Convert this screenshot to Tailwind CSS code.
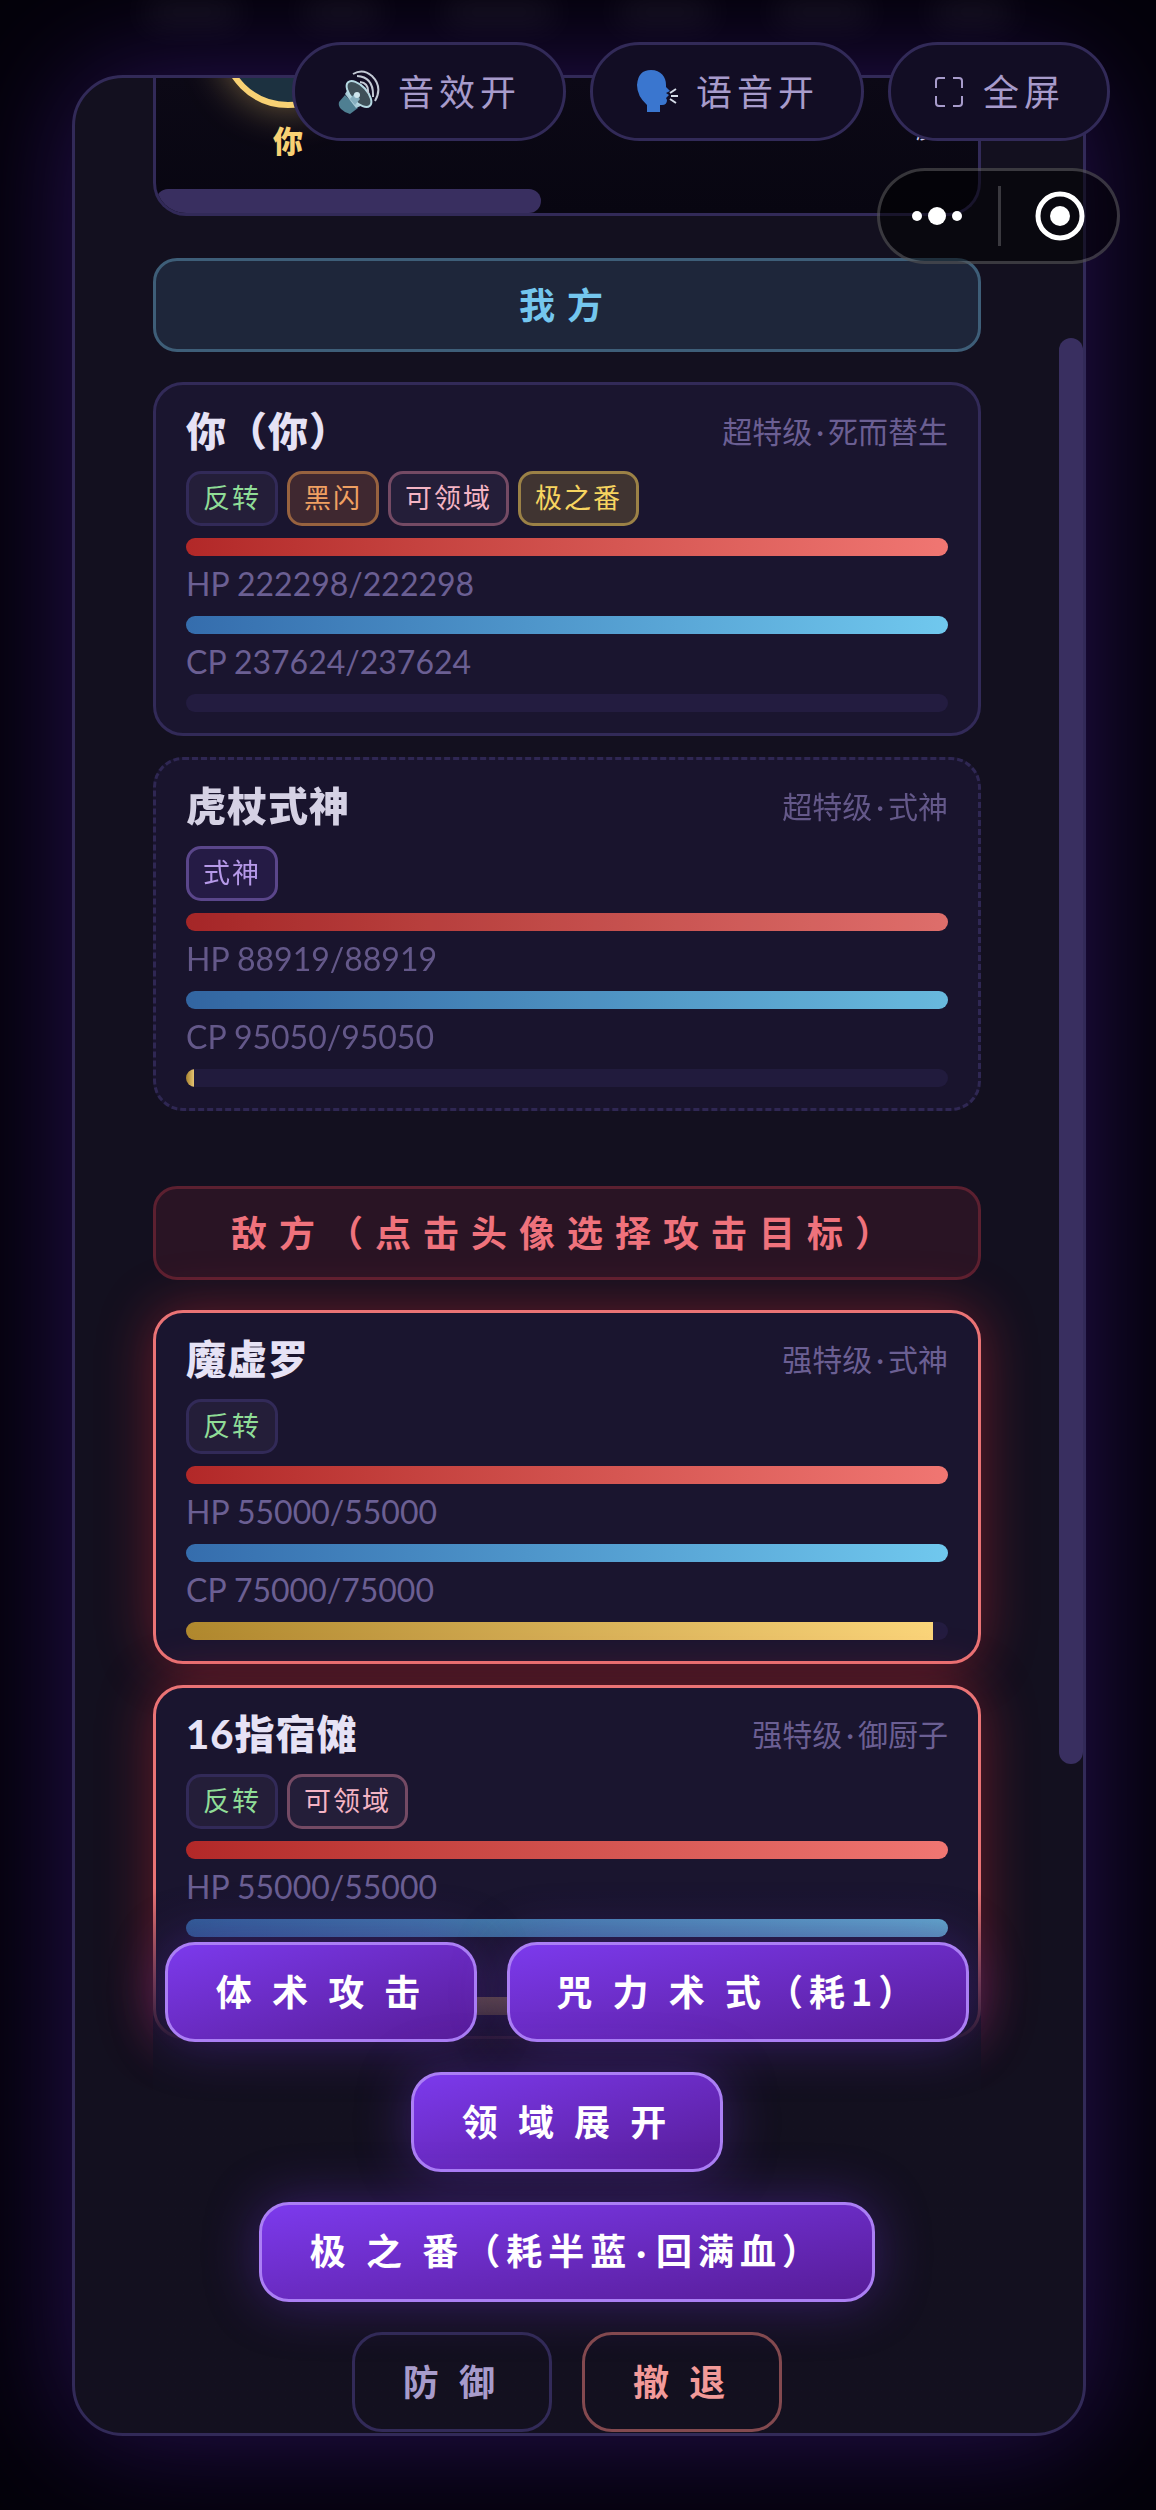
<!DOCTYPE html>
<html lang="zh-CN">
<head>
<meta charset="UTF-8">
<meta name="viewport" content="width=device-width, initial-scale=1.0">
<title>咒术对战</title>
<script src="https://cdn.jsdelivr.net/npm/@tailwindcss/browser@4"></script>
</head>
<body class="relative min-h-screen overflow-x-hidden bg-[#04020a] font-[Lato,'Noto_Sans_CJK_SC',sans-serif] text-[#e6e2f5]">

<!-- top controls -->
<nav class="absolute top-[42px] right-[46px] z-20 flex gap-6 text-[36px] leading-[54px] tracking-[5px] text-[#a79bcb]">
<button class="flex h-[99px] items-center gap-[18px] rounded-full border-3 border-[#322a58] bg-[#120d24] px-[42px]">
<svg class="h-[45px] w-[43px]" viewBox="0 0 43 45" fill="none">
<path d="M2 33 L8 26 L21 39 L13 45 Q8 44 4 40 Q1 37 2 33Z" fill="#4f7f92"/>
<path d="M8 25 L11 20 L26 36 L19 39Z" fill="#a9cbd8"/>
<ellipse cx="22" cy="25" rx="8" ry="16" transform="rotate(-43 22 25)" fill="#3f5059" stroke="#b5d8e2" stroke-width="2"/>
<path d="M13 30 L18 24 L23 30 L18 36Z" fill="#86afbf"/>
<circle cx="20" cy="26" r="3" fill="#cfe6ee"/>
<path d="M23 13 Q32 14 31 24 M20 7 Q37 8 36 28 M16 5 Q26 -1 35 7 Q46 18 38 32" stroke="#c3c9d4" stroke-width="2"/>
</svg>
<span>音效开</span>
</button>
<button class="flex h-[99px] items-center gap-[18px] rounded-full border-3 border-[#322a58] bg-[#120d24] px-[42px]">
<svg class="h-[45px] w-[43px]" viewBox="0 0 43 45" fill="none">
<path d="M16 1 C26 1 31 8 31 16 L31 18 L35 22 L31 24 L34 26 L31 29 L32 31 Q32 36 27 36 L25 36 L25 43 L12 43 L12 36 Q2 27 2 16 Q3 1 16 1Z" fill="#3a76cf"/>
<path d="M35 24 L41 20 M36 27 L43 27 M35 30 L41 34" stroke="#d5dce8" stroke-width="2"/>
</svg>
<span>语音开</span>
</button>
<button class="flex h-[99px] items-center gap-[18px] rounded-full border-3 border-[#322a58] bg-[#120d24] px-[42px]">
<svg class="h-8 w-8" viewBox="0 0 32 32" fill="none" stroke="#a79bcb" stroke-width="2">
<path d="M3 12 V5 Q3 2 6 2 H12 M20 2 H26 Q29 2 29 5 V12 M29 20 V27 Q29 30 26 30 H20 M12 30 H6 Q3 30 3 27 V20"/>
</svg>
<span>全屏</span>
</button>
</nav>

<!-- host app capsule -->
<div class="absolute top-[168px] right-9 z-20 flex h-24 w-[243px] items-center justify-between rounded-full border-3 border-white/20 bg-black/50 pr-8 pl-[30px]">
<button aria-label="更多"><svg class="h-[18px] w-[54px]" viewBox="0 0 54 18" fill="#fff"><circle cx="7" cy="9" r="5"/><circle cx="27" cy="9" r="9"/><circle cx="47" cy="9" r="5"/></svg></button>
<span class="h-[60px] w-[3px] bg-white/20"></span>
<button aria-label="关闭"><svg class="h-[50px] w-[50px]" viewBox="0 0 50 50"><circle cx="25" cy="25" r="22" fill="none" stroke="#fff" stroke-width="5"/><circle cx="25" cy="25" r="10" fill="#fff"/></svg></button>
</div>

<div class="pt-[75px] pr-[70px] pb-[74px] pl-[72px]">
<main class="relative overflow-hidden rounded-[51px] border-3 border-[#322a58] bg-[#13101f] pr-[102px] pb-px pl-[78px] shadow-[0_0_120px_rgba(100,45,215,0.36)]">

<!-- scroll thumb -->
<div class="absolute top-[260px] right-0 h-[1426px] w-6 rounded-full bg-[#392f60]"></div>

<!-- arena -->
<section class="relative h-[138px] overflow-hidden rounded-b-[33px] border-3 border-t-0 border-[#322a58] bg-linear-to-b from-[#0c0916] to-[#080611]">
<div class="absolute -top-[104px] left-[65px] size-[134px] rounded-full border-6 border-[#f7d174] bg-[#1c3140] shadow-[0_0_42px_rgba(247,209,116,0.45)]"></div>
<span class="absolute top-[40px] left-[117px] text-[30px] leading-[44px] font-black text-[#f7d174]">你</span>
<span class="absolute top-[35px] left-[760px] text-[24px] leading-8 whitespace-nowrap text-[#cfc8e6]">魔虚罗</span>
<div class="absolute bottom-0 left-0 h-6 w-[385px] rounded-full bg-[#392f60]"></div>
</section>

<h2 class="mt-[42px] flex h-[94px] items-center justify-center rounded-3xl border-3 border-[#3e5e78] bg-[#1e263a] text-[36px] font-bold tracking-[12px] text-[#74c6ee]">我方</h2>

<article class="mt-[30px] rounded-[30px] border-3 border-[#322a58] bg-[#1a152f] px-[30px] py-[21px]">
<header class="flex items-center justify-between leading-[50px]">
<h3 class="text-[40px] font-black tracking-[1px]">你（你）</h3>
<span class="text-[30px] text-[#6b5f93]">超特级<span class="mx-1">·</span>死而替生</span>
</header>
<div class="mt-[15px] mb-3 flex gap-[9px] text-[27px] leading-[47px] tracking-[2px]">
<span class="rounded-[15px] border-3 border-[#322a58] bg-[#241e39] px-[14px] pb-[2px] text-[#8fdc97]">反转</span>
<span class="rounded-[15px] border-3 border-[#97623f] bg-[#3f2830] px-[14px] pb-[2px] text-[#f0a062]">黑闪</span>
<span class="rounded-[15px] border-3 border-[#744a64] bg-[#241e39] px-[14px] pb-[2px] text-[#f4b4c4]">可领域</span>
<span class="rounded-[15px] border-3 border-[#9b8146] bg-[#403431] px-[14px] pb-[2px] text-[#f7d560]">极之番</span>
</div>
<div class="h-[18px] overflow-hidden rounded-full bg-[#231c40]"><div class="h-full bg-linear-to-r from-[#b22828] to-[#f07672]" style="width:100%"></div></div>
<p class="h-[60px] text-[32px] leading-[56px] text-[#6b5f93]">HP 222298/222298</p>
<div class="h-[18px] overflow-hidden rounded-full bg-[#231c40]"><div class="h-full bg-linear-to-r from-[#356dad] to-[#70c8ee]" style="width:100%"></div></div>
<p class="h-[60px] text-[32px] leading-[56px] text-[#6b5f93]">CP 237624/237624</p>
<div class="h-[18px] overflow-hidden rounded-full bg-[#231c40]"></div>
</article>

<article class="mt-[21px] rounded-[30px] border-3 border-dashed border-[#322a58] bg-[#1a152f] px-[30px] py-[21px] opacity-92">
<header class="flex items-center justify-between leading-[50px]">
<h3 class="text-[40px] font-black tracking-[1px]">虎杖式神</h3>
<span class="text-[30px] text-[#6b5f93]">超特级<span class="mx-1">·</span>式神</span>
</header>
<div class="mt-[15px] mb-3 flex gap-[9px] text-[27px] leading-[47px] tracking-[2px]">
<span class="rounded-[15px] border-3 border-[#614b94] bg-[#271d49] px-[14px] pb-[2px] text-[#c4a5fa]">式神</span>
</div>
<div class="h-[18px] overflow-hidden rounded-full bg-[#231c40]"><div class="h-full bg-linear-to-r from-[#b22828] to-[#f07672]" style="width:100%"></div></div>
<p class="h-[60px] text-[32px] leading-[56px] text-[#6b5f93]">HP 88919/88919</p>
<div class="h-[18px] overflow-hidden rounded-full bg-[#231c40]"><div class="h-full bg-linear-to-r from-[#356dad] to-[#70c8ee]" style="width:100%"></div></div>
<p class="h-[60px] text-[32px] leading-[56px] text-[#6b5f93]">CP 95050/95050</p>
<div class="h-[18px] overflow-hidden rounded-full bg-[#231c40]"><div class="h-full bg-linear-to-r from-[#b38c2e] to-[#fad57a]" style="width:1%"></div></div>
</article>

<h2 class="mt-[75px] flex h-[94px] items-center justify-center rounded-3xl border-3 border-[#5c2030] bg-[#291424] text-[36px] font-bold tracking-[12px] text-[#ef727c]">敌方（点击头像选择攻击目标）</h2>

<article class="mt-[30px] rounded-[30px] border-3 border-[#ea7375] bg-[#1a152f] px-[30px] py-[21px] shadow-[0_0_54px_rgba(229,45,55,0.4)]">
<header class="flex items-center justify-between leading-[50px]">
<h3 class="text-[40px] font-black tracking-[1px]">魔虚罗</h3>
<span class="text-[30px] text-[#6b5f93]">强特级<span class="mx-1">·</span>式神</span>
</header>
<div class="mt-[15px] mb-3 flex gap-[9px] text-[27px] leading-[47px] tracking-[2px]">
<span class="rounded-[15px] border-3 border-[#322a58] bg-[#241e39] px-[14px] pb-[2px] text-[#8fdc97]">反转</span>
</div>
<div class="h-[18px] overflow-hidden rounded-full bg-[#231c40]"><div class="h-full bg-linear-to-r from-[#b22828] to-[#f07672]" style="width:100%"></div></div>
<p class="h-[60px] text-[32px] leading-[56px] text-[#6b5f93]">HP 55000/55000</p>
<div class="h-[18px] overflow-hidden rounded-full bg-[#231c40]"><div class="h-full bg-linear-to-r from-[#356dad] to-[#70c8ee]" style="width:100%"></div></div>
<p class="h-[60px] text-[32px] leading-[56px] text-[#6b5f93]">CP 75000/75000</p>
<div class="h-[18px] overflow-hidden rounded-full bg-[#231c40]"><div class="h-full bg-linear-to-r from-[#b0892e] to-[#fad57a]" style="width:98%"></div></div>
</article>

<article class="mt-[21px] rounded-[30px] border-3 border-[#ea7375] bg-[#1a152f] px-[30px] py-[21px] shadow-[0_0_54px_rgba(229,45,55,0.4)]">
<header class="flex items-center justify-between leading-[50px]">
<h3 class="text-[40px] font-black tracking-[1px]">16指宿傩</h3>
<span class="text-[30px] text-[#6b5f93]">强特级<span class="mx-1">·</span>御厨子</span>
</header>
<div class="mt-[15px] mb-3 flex gap-[9px] text-[27px] leading-[47px] tracking-[2px]">
<span class="rounded-[15px] border-3 border-[#322a58] bg-[#241e39] px-[14px] pb-[2px] text-[#8fdc97]">反转</span>
<span class="rounded-[15px] border-3 border-[#744a64] bg-[#241e39] px-[14px] pb-[2px] text-[#f4b4c4]">可领域</span>
</div>
<div class="h-[18px] overflow-hidden rounded-full bg-[#231c40]"><div class="h-full bg-linear-to-r from-[#b22828] to-[#f07672]" style="width:100%"></div></div>
<p class="h-[60px] text-[32px] leading-[56px] text-[#6b5f93]">HP 55000/55000</p>
<div class="h-[18px] overflow-hidden rounded-full bg-[#231c40]"><div class="h-full bg-linear-to-r from-[#356dad] to-[#70c8ee]" style="width:100%"></div></div>
<div class="h-[60px]"></div>
<div class="h-[18px] overflow-hidden rounded-full bg-[#231c40]"><div class="h-full bg-linear-to-r from-[#b0892e] to-[#fad57a]" style="width:98%"></div></div>
</article>

<!-- action bar, fades over the end of the list -->
<div class="relative -mt-[151px] flex flex-wrap justify-center gap-[30px] bg-linear-to-b from-transparent to-[#13101f] to-30% pt-[54px] font-['Noto_Sans_CJK_SC',sans-serif] text-[36px] leading-[50px] font-bold tracking-[6px] text-white">
<button class="h-[100px] rounded-[30px] border-3 border-[#ab7ff5] bg-linear-to-br from-[#7c3aed] to-[#571c98] px-12 pb-1 shadow-[0_0_54px_rgba(124,58,237,0.35)]">体 术 攻 击</button>
<button class="h-[100px] rounded-[30px] border-3 border-[#ab7ff5] bg-linear-to-br from-[#7c3aed] to-[#571c98] px-[46px] pb-1 shadow-[0_0_54px_rgba(124,58,237,0.35)]">咒 力 术 式（耗1）</button>
<button class="h-[100px] rounded-[30px] border-3 border-[#ab7ff5] bg-linear-to-br from-[#7c3aed] to-[#571c98] px-12 pb-1 shadow-[0_0_54px_rgba(124,58,237,0.35)]">领 域 展 开</button>
<button class="h-[100px] rounded-[30px] border-3 border-[#ab7ff5] bg-linear-to-br from-[#7c3aed] to-[#571c98] px-12 pb-1 shadow-[0_0_54px_rgba(124,58,237,0.35)]">极 之 番（耗半蓝<span class="mx-1 font-[Lato,sans-serif]">·</span>回满血）</button>
<div class="flex w-full justify-center gap-[30px]">
<button class="h-[100px] rounded-[30px] border-3 border-[#322a58] px-12 pb-1 text-[#a79bcb]">防 御</button>
<button class="h-[100px] rounded-[30px] border-3 border-[#83494f] px-12 pb-1 text-[#f29a99]">撤 退</button>
</div>
</div>

</main>
</div>

<!-- soft haze behind the header -->
<div class="pointer-events-none absolute inset-x-0 top-0 flex h-5 justify-between overflow-visible px-36 blur-lg">
<span class="h-6 w-24 rounded-full bg-white/7"></span>
<span class="h-6 w-20 rounded-full bg-white/7"></span>
<span class="h-6 w-28 rounded-full bg-white/7"></span>
<span class="h-6 w-24 rounded-full bg-white/7"></span>
<span class="h-6 w-24 rounded-full bg-white/7"></span>
<span class="h-6 w-20 rounded-full bg-white/7"></span>
</div>
</body>
</html>
